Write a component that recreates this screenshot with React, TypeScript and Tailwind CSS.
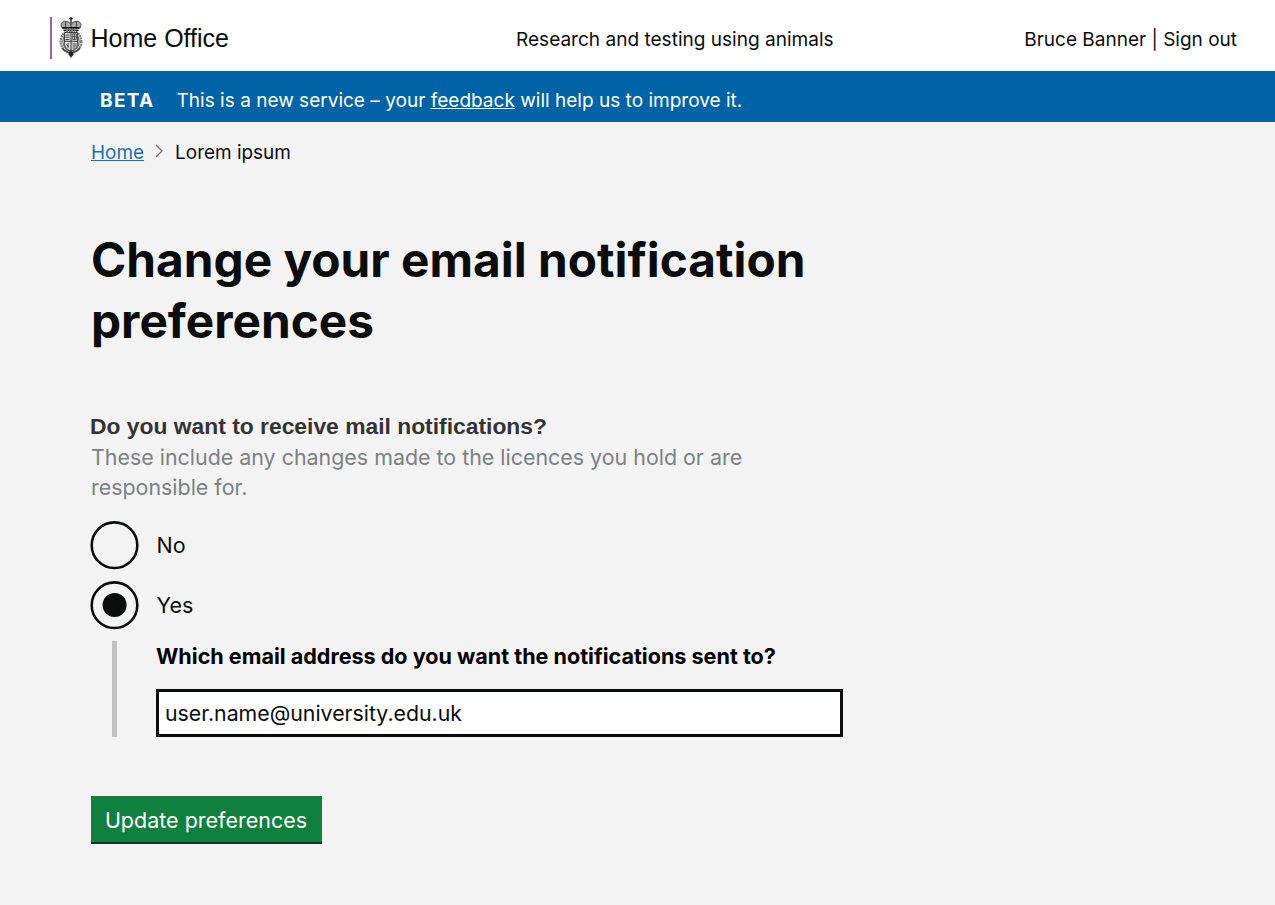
import React from "react";

function Crest() {
  return (
    <svg width="24" height="41" viewBox="0 0 24 41" fill="none" stroke="#333" strokeWidth="0.9">
      <path d="M12 0v6M10.2 1.6h3.6" stroke="#111" strokeWidth="1.3" />
      <path d="M3.5 11.5C.2 7.500 3 3.800 7 4.300c2.200.3 3.900 1.500 5 3.200 1.100-1.700 2.800-2.900 5-3.200 4-.5 6.800 3.200 3.500 7.200z" fill="#aaa" />
      <path d="M7 4.500c-1 2.500-.5 5 .5 7M17 4.500c1 2.500.5 5-.5 7M12 6v5" />
      <path d="M3.500 10.800h17M4.500 13.200h15" stroke="#111" strokeWidth="1.5" />
      <path d="M5 12h14" stroke="#999" strokeDasharray="1.500 1" />
      <ellipse cx="12" cy="24.500" rx="10.300" ry="11" stroke="#777" strokeWidth="2.400" strokeDasharray="1.800 .7" />
      <ellipse cx="12" cy="24.500" rx="8.200" ry="9.500" stroke="#444" fill="#ddd" />
      <path d="M5.500 15.500h13v11c0 3.800-2.800 6.300-6.500 7.500-3.700-1.200-6.500-3.700-6.500-7.500z" fill="#ddd" stroke="#333" />
      <path d="M12 15.500V34M5.500 24.300h13" stroke="#222" />
      <path d="M6.500 18h4M6.500 20.300h4M6.500 22.500h4M13.500 27h4M13.500 29h3.500M13.500 31h2" stroke="#444" strokeWidth="1.100" />
      <path d="M13.700 16.800h3.600v5.700h-3.600zM15.500 17v5M14 19.700h3M9 26v5M7 27.500l3 2" stroke="#444" />
      <path d="M3 31c3 3.500 6 4.500 9 5 3-.5 6-1.500 9-5" stroke="#444" strokeWidth="1.300" />
      <path d="m10.300 35 1.700-1 1.700 1 .5 2.500L12 40.500l-2.200-3z" fill="#222" stroke="#222" strokeWidth=".5" />
    </svg>
  );
}

function Radio({ label, checked }: { label: string; checked?: boolean }) {
  return (
    <label className="flex h-12 items-center">
      <svg className="overflow-visible" width="48" height="48" viewBox="0 0 48 48" fill="none">
        <circle cx="23.500" cy="24.200" r="22.800" stroke="#0b0c0c" strokeWidth="2.600" />
        {checked && <circle cx="23.600" cy="24.100" r="12" fill="#0b0c0c" />}
      </svg>
      <span className="ml-[17.500px] text-[21.500px] leading-8">{label}</span>
    </label>
  );
}

export default function App() {
  return (
    <div className="h-[905px] w-[1275px] overflow-hidden bg-[#f3f3f3] font-['Inter',sans-serif] text-[#0b0c0c]">
      <header className="flex h-[71px] bg-white">
        <div className="ml-[49.5px] mt-[17px] flex h-[42px] w-[466.5px] border-l-2 border-[#9461b3] pl-[7.5px]">
          <Crest />
          <span className="ml-[7.5px] mt-[3px] font-['Liberation_Sans',sans-serif] text-[25px] leading-9">Home Office</span>
        </div>
        <span className="mt-[25px] whitespace-nowrap text-[19.060px] leading-[30px]">Research and testing using animals</span>
        <span className="ml-auto mr-[38px] mt-[25px] whitespace-nowrap text-[19px] leading-[30px]">Bruce Banner | Sign out</span>
      </header>
      <div className="flex h-[51px] items-center bg-[#0063a6] pl-[100px] pt-[10px] text-[19.050px] text-white">
        <strong className="mr-[22px] tracking-[1.3px]">BETA</strong>
        <span>This is a new service – your <a className="underline">feedback</a> will help us to improve it.</span>
      </div>
      <main className="pl-[91px]">
        <nav className="flex h-[60px] items-center pt-[3px] text-[18.950px]">
          <a className="text-[#1b70b0] underline">Home</a>
          <svg className="mb-[5px] ml-[11px] mr-[11px]" width="9" height="14" viewBox="0 0 9 14" fill="none" stroke="#777" strokeWidth="1.400"><path d="m1 1 6 6-6 6" /></svg>
          <span>Lorem ipsum</span>
        </nav>
        <h1 className="mt-[48px] text-[47.750px] font-bold leading-[61px]">Change your email notification<br />preferences</h1>
        <h2 className="-ml-px mt-[59px] font-['Liberation_Sans',sans-serif] text-[22.850px] font-bold leading-[31px] text-[#333]">Do you want to receive mail notifications?</h2>
        <p className="h-[61px] text-[21.420px] leading-[30px] text-[#7b8184]">These include any changes made to the licences you hold or are<br />responsible for.</p>
        <div className="mt-[18px] flex flex-col gap-3"><Radio label="No" /><Radio label="Yes" checked /></div>
        <div className="ml-[21px] mt-3 h-24 border-l-[5px] border-[#bfc1c3] pl-[39px]">
          <div className="text-[21.570px] font-bold leading-[31px] text-black">Which email address do you want the notifications sent to?</div>
          <input className="mt-[17px] block h-12 w-[687px] border-[3px] border-[#0b0c0c] bg-white px-[6px] text-[21.300px]" defaultValue="user.name@university.edu.uk" />
        </div>
        <button className="mt-[59px] h-12 w-[231px] border-b-2 border-[#0b3b20] bg-[#10803e] pr-[1px] pt-[2px] text-[21.500px] text-white">Update preferences</button>
      </main>
    </div>
  );
}
